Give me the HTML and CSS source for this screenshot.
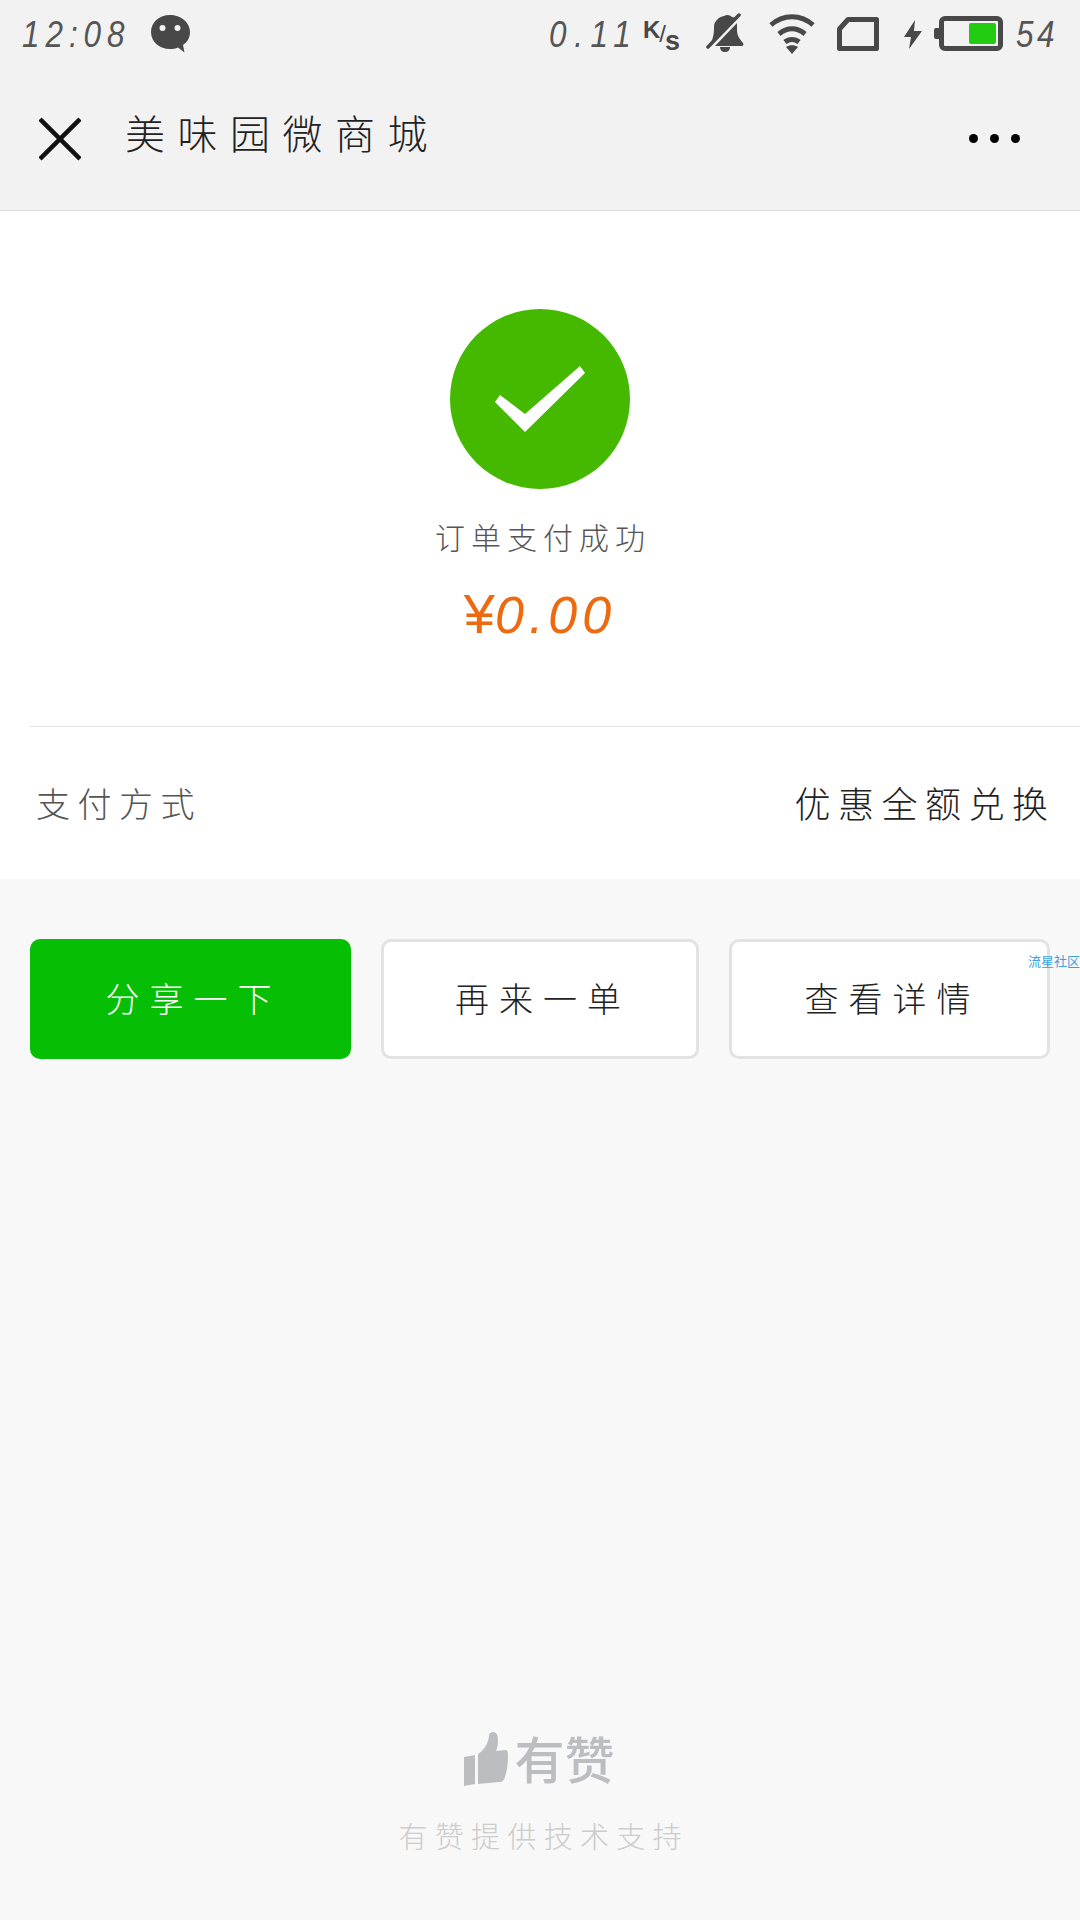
FILE: index.html
```html
<!DOCTYPE html>
<html>
    <head>
        <meta charset="utf-8">
        <title>美味园微商城</title>
        <link rel="stylesheet" href="styles.css">
    </head>
    <body>
        <div class="header">
            <div class="status">
                <span class="clock">12:08</span>
                <svg class="ic-chat" width="40" height="40" viewBox="0 0 40 40">
                    <path fill="#484848" d="M20 1C9.500 1 1 8.200 1 18s8.500 17 19 17c3 0 5.500-.5 8-1.500l6.500 5-1.500-7.500c4.500-3 7-7.500 7-13C40 8.200 30.500 1 20 1z"/>
                    <circle cx="12.500" cy="14" r="3" fill="#f2f2f2"/>
                    <circle cx="27.500" cy="14" r="3" fill="#f2f2f2"/>
                </svg>
                <span class="speed">0.11</span>
                <span class="unit"><b>K</b>/<b>s</b></span>
                <svg class="ic-bell" width="38" height="40" viewBox="0 0 38 40">
                    <path fill="#484848" d="M4 31C8 25 8 18 8 14 8 8 13 4 18 3c3-2 6-1 8 1l4 1z"/>
                    <path fill="#484848" d="M31 10c0 2 0 4 0 7 0 6 3 9 6 13 1 2 0 3-1 3H9z"/>
                    <path fill="#484848" d="M14 34h10c0 3-2 5-5 5s-5-2-5-5z"/>
                    <path stroke="#484848" stroke-width="3.500" stroke-linecap="round" d="M2 34L33 2"/>
                </svg>
                <svg class="ic-wifi" width="46" height="40" viewBox="0 0 46 40" fill="none" stroke="#484848" stroke-width="5">
                    <path d="M2 11C14 0 32 0 44 11"/>
                    <path d="M10 20c8-7 18-7 26 0"/>
                    <path d="M16 28c4-3.500 10-3.500 14 0"/>
                    <path fill="#484848" stroke="none" d="M17 33c3.500-2.500 8.500-2.500 12 0l-6 7z"/>
                </svg>
                <svg class="ic-sim" width="42" height="34" viewBox="0 0 42 34">
                    <path fill="none" stroke="#484848" stroke-width="5" stroke-linejoin="round" d="M2.500 31.500V12L11 2.500h28.500v29z"/>
                </svg>
                <svg class="ic-bolt" width="20" height="29" viewBox="0 0 20 29">
                    <path fill="#484848" d="M12 0L1 17h7L6 29 19 11h-8z"/>
                </svg>
                <div class="battery">
                    <div class="battery-fill"></div>
                </div>
                <span class="level">54</span>
            </div>
            <div class="nav">
                <svg class="ic-close" width="42" height="44" viewBox="0 0 42 44">
                    <path stroke="#111" stroke-width="4.500" d="M1 2l40 40M41 2L1 42"/>
                </svg>
                <span class="nav-title">美味园微商城</span>
                <div class="dots"><i></i><i></i><i></i></div>
            </div>
        </div>

        <div class="result">
            <svg class="ic-ok" width="180" height="180" viewBox="0 0 180 180">
                <circle cx="90" cy="90" r="90" fill="#44b900"/>
                <path fill="#fff" d="M45 93L50 86 75 105 130 57 135 64 75 123z"/>
            </svg>
            <div class="result-text">订单支付成功</div>
            <div class="amount"><span class="yen">¥</span><span class="num">0.00</span></div>
            <div class="pay-row">
                <span class="pay-label">支付方式</span>
                <span class="pay-value">优惠全额兑换</span>
            </div>
        </div>

        <div class="actions">
            <div class="btn btn-green">分享一下</div>
            <div class="btn btn-mid">再来一单</div>
            <div class="btn">查看详情</div>
            <span class="mark">流星社区</span>
        </div>

        <div class="footer">
            <div class="logo">
                <svg class="ic-thumb" width="44" height="54" viewBox="0 0 44 54">
                    <path fill="#bbbdc0" d="M0 25l11-2v29L0 54z"/>
                    <path fill="#bbbdc0" d="M14 22c6-4 10-10 11-18 0-3 2-4 4-4 4 0 5 4 5 8 0 5-1 9-2 11l9-1c3 0 3 3 3 6 0 8-1 15-3 21-1 3-2 5-6 5l-21 2z"/>
                </svg>
                <span class="logo-name">有赞</span>
            </div>
            <div class="powered">有赞提供技术支持</div>
        </div>
    </body>
</html>
```

FILE: styles.css
```css
html, body {
    padding: 0;
    margin: 0;
    height: 100%;
}
body {
    width: 1080px;
    height: 1920px;
    overflow: hidden;
    display: flex;
    flex-direction: column;
    background-color: #f8f8f8;
    font-family: "Noto Sans CJK SC", "Noto Sans", sans-serif;
    font-weight: 300;
}
.header {
    background-color: #f2f2f2;
    border-bottom: 1px solid #dcdcdc;
    height: 211px;
    box-sizing: border-box;
}
.status {
    height: 70px;
    display: flex;
    align-items: center;
    padding-left: 22px;
    color: #484848;
}
.clock, .speed, .level {
    font-family: "Liberation Sans", sans-serif;
    font-style: italic;
    font-weight: 400;
    font-size: 37px;
    line-height: 40px;
    color: #555;
    transform: scaleX(.85);
    transform-origin: left center;
}
.clock {
    width: 105px;
    letter-spacing: 7px;
}
.ic-chat {
    margin-left: 23px;
    margin-top: -2px;
}
.speed {
    margin-left: 359px;
    width: 94px;
    letter-spacing: 9px;
}
.unit {
    width: 38px;
    font-family: "Liberation Sans", sans-serif;
    font-size: 24px;
    line-height: 40px;
    letter-spacing: -1px;
    margin-top: -4px;
    white-space: nowrap;
}
.unit b {
    font-weight: 700;
    position: relative;
}
.unit b:last-child {
    font-size: 27px;
    top: 8px;
}
.unit b:first-child {
    top: -4px;
}
.ic-bell {
    margin-left: 25px;
    margin-top: -4px;
}
.ic-wifi {
    margin-left: 25px;
    margin-top: -3px;
}
.ic-sim {
    margin-left: 22px;
    margin-top: -3px;
}
.ic-bolt {
    margin-left: 24px;
    margin-top: -2px;
}
.battery {
    margin-left: 16px;
    margin-top: -3px;
    width: 64px;
    height: 35px;
    box-sizing: border-box;
    border: 5px solid #484848;
    border-radius: 6px;
    display: flex;
    justify-content: flex-end;
    padding: 2px 2px;
    position: relative;
}
.battery:before {
    content: "";
    position: absolute;
    left: -10px;
    top: 7px;
    width: 5px;
    height: 11px;
    background-color: #484848;
    border-radius: 2px 0 0 2px;
}
.battery-fill {
    width: 27px;
    background-color: #22cc11;
    border-radius: 2px;
}
.level {
    margin-left: 13px;
    letter-spacing: 4px;
}
.nav {
    height: 139px;
    display: flex;
    align-items: center;
    padding-left: 39px;
}
.ic-close {
    margin-top: -1px;
}
.nav-title {
    margin-left: 44px;
    font-size: 40px;
    letter-spacing: 12.500px;
    color: #222;
    line-height: 50px;
    margin-top: -15px;
}
.dots {
    margin-left: auto;
    margin-right: 60px;
    display: flex;
    gap: 12px;
    margin-top: -2px;
}
.dots i {
    width: 9px;
    height: 9px;
    border-radius: 50%;
    background-color: #000;
}
.result {
    background-color: #fff;
    height: 668px;
    display: flex;
    flex-direction: column;
    align-items: center;
    padding-top: 98px;
    box-sizing: border-box;
}
.result-text {
    margin-top: 27px;
    font-size: 30px;
    line-height: 40px;
    letter-spacing: 6px;
    margin-right: -6px;
    color: #555;
}
.amount {
    margin-top: 24px;
    height: 68px;
    line-height: 68px;
    color: #ee6a10;
    white-space: nowrap;
}
.yen {
    font-family: "Liberation Sans", sans-serif;
    font-size: 56px;
    font-weight: 400;
}
.num {
    font-family: "Liberation Sans", sans-serif;
    font-style: italic;
    font-size: 52px;
    letter-spacing: 5px;
}
.pay-row {
    align-self: stretch;
    margin: 78px 0 0 30px;
    border-top: 1px solid #e4e4e4;
    display: flex;
    justify-content: space-between;
    align-items: center;
    height: 150px;
    padding: 0 32px 0 6px;
}
.pay-label {
    font-size: 34px;
    letter-spacing: 7.500px;
    color: #555;
}
.pay-value {
    font-size: 36px;
    letter-spacing: 7.500px;
    margin-right: -7.500px;
    color: #222;
}
.actions {
    display: flex;
    gap: 30px;
    padding: 60px 30px 0;
    position: relative;
}
.btn {
    height: 120px;
    width: 321px;
    flex: none;
    box-sizing: border-box;
    border: 3px solid #e2e2e2;
    border-radius: 10px;
    background-color: #fff;
    display: flex;
    align-items: center;
    justify-content: center;
    font-size: 34px;
    letter-spacing: 10px;
    padding: 0 0 4px 6px;
    color: #222;
}
.btn-green {
    border: none;
    background-color: #06be04;
    color: #fff;
}
.btn-mid {
    width: 318px;
}
.mark {
    position: absolute;
    right: 0;
    top: 74px;
    font-size: 13px;
    line-height: 16px;
    color: #3aa0e0;
    font-weight: 400;
}
.footer {
    margin-top: auto;
    padding-bottom: 62px;
    display: flex;
    flex-direction: column;
    align-items: center;
}
.logo {
    display: flex;
    align-items: center;
    gap: 7px;
    height: 56px;
    margin-right: 2px;
}
.ic-thumb {
    margin-top: 3px;
}
.logo-name {
    font-size: 50px;
    line-height: 56px;
    font-weight: 500;
    color: #bbbdc0;
}
.powered {
    margin-top: 27px;
    font-size: 29px;
    line-height: 46px;
    letter-spacing: 7.300px;
    margin-right: -7.300px;
    color: #ccc;
}
```
